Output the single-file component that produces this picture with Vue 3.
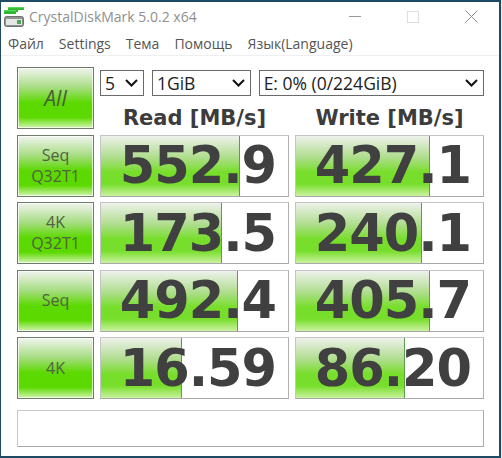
<script setup>
const rows = [
  { label: ['Seq', 'Q32T1'], cells: [{ v: '552.9', w: 139 }, { v: '427.1', w: 134 }] },
  { label: ['4K', 'Q32T1'], cells: [{ v: '173.5', w: 121 }, { v: '240.1', w: 126 }] },
  { label: ['Seq'], cells: [{ v: '492.4', w: 137 }, { v: '405.7', w: 134 }] },
  { label: ['4K'], cells: [{ v: '16.59', w: 81 }, { v: '86.20', w: 109 }] },
]
const menu = ['Файл', 'Settings', 'Тема', 'Помощь', 'Язык(Language)']
</script>

<template>
  <div class="window">
    <header class="titlebar">
      <svg class="logo" width="20" height="20" viewBox="0 0 20 20">
        <path d="M4 0h16v3h-6v2h-2v2H0V3h4z" fill="#2fb52f" />
        <path d="M4 0h16v1.200H4zM0 3h12v1.200H0z" fill="#55d655" />
        <rect x="0.500" y="9.500" width="19" height="10" rx="2" fill="#8d9290" stroke="#6d7270" />
        <rect x="2" y="12" width="16" height="6" fill="#e4e8e4" />
        <rect x="13" y="13" width="4" height="4" fill="#52a552" />
      </svg>
      <span class="title">CrystalDiskMark 5.0.2 x64</span>
      <div class="controls">
        <svg width="12" height="12" viewBox="0 0 12 12"><path d="M0 5.500h12" stroke="#9a9a9a" /></svg>
        <svg width="12" height="12" viewBox="0 0 12 12"><rect x="0.500" y="0.500" width="11" height="11" fill="none" stroke="#dedede" /></svg>
        <svg width="13" height="13" viewBox="0 0 13 13"><path d="M0.500 0.500l12 12M12.500 0.500l-12 12" stroke="#8a8a8a" /></svg>
      </div>
    </header>
    <nav class="menu">
      <span v-for="m in menu" :key="m">{{ m }}</span>
    </nav>
    <main class="board">
      <div class="btn btn-all">All</div>
      <div class="head">
        <div class="combos">
          <div class="combo c-n"><span>5</span><svg width="13" height="8" viewBox="0 0 13 8"><path d="M1 1l5.500 5.500L12 1" fill="none" stroke="#111" stroke-width="2" /></svg></div>
          <div class="combo c-s"><span>1GiB</span><svg width="13" height="8" viewBox="0 0 13 8"><path d="M1 1l5.500 5.500L12 1" fill="none" stroke="#111" stroke-width="2" /></svg></div>
          <div class="combo c-d"><span>E: 0% (0/224GiB)</span><svg width="13" height="8" viewBox="0 0 13 8"><path d="M1 1l5.500 5.500L12 1" fill="none" stroke="#111" stroke-width="2" /></svg></div>
        </div>
        <div class="cols">
          <div>Read [MB/s]</div>
          <div>Write [MB/s]</div>
        </div>
      </div>
      <template v-for="(r, i) in rows" :key="i">
        <div class="btn">
          <span v-for="l in r.label" :key="l">{{ l }}</span>
        </div>
        <div v-for="c in r.cells" :key="c.v" class="meter">
          <div class="bar" :style="{ width: c.w + 'px' }"></div>
          <span class="val">{{ c.v }}</span>
        </div>
      </template>
      <div class="comment"></div>
    </main>
  </div>
</template>

<style scoped>
.window {
  width: 501px;
  height: 458px;
  box-sizing: border-box;
  background: #fff;
  border-style: solid;
  border-color: #1f4a63;
  border-width: 2px 2px 2px 1px;
  display: flex;
  flex-direction: column;
  font-family: "Open Sans", "Noto Sans", sans-serif;
  overflow: hidden;
}
.titlebar {
  height: 29px;
  flex: none;
  display: flex;
  align-items: center;
  padding: 1px 21px 0 3px;
  box-sizing: border-box;
}
.logo { margin-right: 5px; flex: none; }
.title { font-size: 14px; color: #8f8f8f; margin-top: -1px; }
.controls {
  margin-left: auto;
  display: flex;
  align-items: center;
  gap: 46px;
  margin-top: -1px;
}
.menu {
  height: 25px;
  flex: none;
  display: flex;
  gap: 15px;
  padding: 1px 0 0 7px;
  box-sizing: border-box;
  align-items: center;
  font-size: 14px;
  color: #555;
  border-bottom: 1px solid #efefef;
}
.board {
  display: grid;
  grid-template-columns: 77px 189px 189px;
  grid-auto-rows: 62px;
  gap: 5.500px 6px;
  margin: 11px 0 0 16px;
}
.btn {
  box-sizing: border-box;
  border: 1px solid #6e7c6a;
  box-shadow: inset 0 0 0 1px #ffffffb0;
  background: linear-gradient(#f1f4ef 0%, #a8dd84 32%, #5cd900 58%, #5cd900 82%, #d2f5ae 100%);
  display: flex;
  flex-direction: column;
  align-items: center;
  justify-content: center;
  color: #4f6340;
  font-size: 16px;
  line-height: 21px;
}
.btn-all { font-size: 21px; font-style: italic; color: #46603a; }
.head { grid-column: 2 / 4; display: flex; flex-direction: column; }
.combos { display: flex; gap: 8px; margin: 3px 0 0 0; }
.combo {
  height: 26px;
  box-sizing: border-box;
  border: 1px solid #6a6a6a;
  display: flex;
  align-items: center;
  justify-content: space-between;
  padding: 0 5px 0 4px;
  font-size: 17.500px;
  color: #222;
  background: #fff;
}
.c-n { width: 44px; }
.c-s { width: 99px; }
.c-d { width: 226px; }
.cols {
  display: grid;
  grid-template-columns: 189px 189px;
  gap: 6px;
  text-align: center;
  font-family: "DejaVu Sans", sans-serif;
  font-weight: 700;
  font-size: 21px;
  line-height: 24px;
  margin-top: 10px;
  color: #3c3c3c;
}
.meter {
  position: relative;
  box-sizing: border-box;
  border: 1px solid #c4c4c4;
  border-right-color: #b0b0b0;
  border-bottom-color: #a8a8a8;
  background: #fff;
  overflow: hidden;
  display: flex;
  align-items: center;
  justify-content: flex-end;
  padding-right: 12px;
}
.bar {
  position: absolute;
  left: 0;
  top: 0;
  bottom: 0;
  box-sizing: border-box;
  border-right: 1px solid #5f9a52;
  background: linear-gradient(#eef1ec 0%, #aedd8c 36%, #78de2c 60%, #78de2c 80%, #cbf2a0 100%);
}
.val {
  position: relative;
  font-family: "DejaVu Sans", sans-serif;
  font-weight: 700;
  font-size: 51px;
  letter-spacing: -1px;
  line-height: 1;
  color: #404040;
}
.comment {
  grid-column: 1 / 4;
  height: 37px;
  margin-top: 5px;
  box-sizing: border-box;
  border: 1px solid #c8c8c8;
  border-right-color: #aaa;
  border-bottom-color: #aaa;
  background: #fff;
}
</style>

<style>
html, body { margin: 0; padding: 0; background: #dfeef0; }
</style>
